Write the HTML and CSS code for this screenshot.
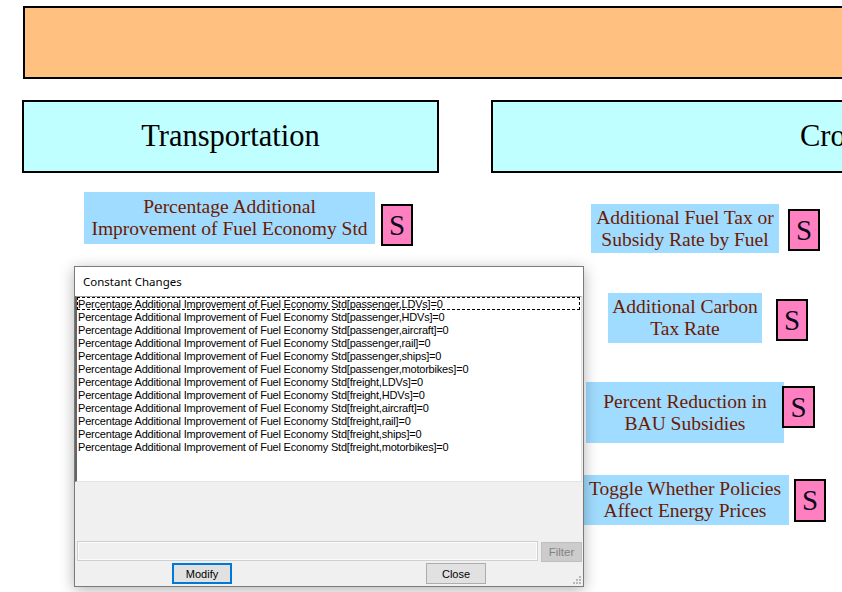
FILE: index.html
```html
<!DOCTYPE html>
<html>
<head>
<meta charset="utf-8">
<title>Constant Changes</title>
<link rel="stylesheet" href="styles.css">
</head>
<body>
<div class="canvas">
  <div class="node header"></div>
  <div class="node sector transport">Transportation</div>
  <div class="node sector cross">Cross-Sector</div>

  <div class="node label l1">Percentage Additional<br>Improvement of Fuel Economy Std</div>
  <div class="node sbox s1">S</div>

  <div class="node label l2">Additional Fuel Tax or<br>Subsidy Rate by Fuel</div>
  <div class="node sbox s2">S</div>

  <div class="node label l3">Additional Carbon<br>Tax Rate</div>
  <div class="node sbox s3">S</div>

  <div class="node label l4">Percent Reduction in<br>BAU Subsidies</div>
  <div class="node sbox s4">S</div>

  <div class="node label l5">Toggle Whether Policies<br>Affect Energy Prices</div>
  <div class="node sbox s5">S</div>

  <div class="node label l6"></div>

  <div class="dialog">
    <div class="titlebar">Constant Changes</div>
    <div class="listbox">
      <div class="item focus">Percentage Additional Improvement of Fuel Economy Std[passenger,LDVs]=0</div>
      <div class="item">Percentage Additional Improvement of Fuel Economy Std[passenger,HDVs]=0</div>
      <div class="item">Percentage Additional Improvement of Fuel Economy Std[passenger,aircraft]=0</div>
      <div class="item">Percentage Additional Improvement of Fuel Economy Std[passenger,rail]=0</div>
      <div class="item">Percentage Additional Improvement of Fuel Economy Std[passenger,ships]=0</div>
      <div class="item">Percentage Additional Improvement of Fuel Economy Std[passenger,motorbikes]=0</div>
      <div class="item">Percentage Additional Improvement of Fuel Economy Std[freight,LDVs]=0</div>
      <div class="item">Percentage Additional Improvement of Fuel Economy Std[freight,HDVs]=0</div>
      <div class="item">Percentage Additional Improvement of Fuel Economy Std[freight,aircraft]=0</div>
      <div class="item">Percentage Additional Improvement of Fuel Economy Std[freight,rail]=0</div>
      <div class="item">Percentage Additional Improvement of Fuel Economy Std[freight,ships]=0</div>
      <div class="item">Percentage Additional Improvement of Fuel Economy Std[freight,motorbikes]=0</div>
    </div>
    <div class="spacer"></div>
    <div class="filter-row">
      <div class="filter-input"></div>
      <div class="btn filter-btn">Filter</div>
    </div>
    <div class="button-row">
      <div class="cell"><div class="btn default">Modify</div></div>
      <div class="cell"><div class="btn">Close</div></div>
    </div>
    <svg class="grip" width="8" height="8" viewBox="0 0 8 8">
      <rect x="6" y="0" width="2" height="2" fill="#b8b8b8"/>
      <rect x="3" y="3" width="2" height="2" fill="#b8b8b8"/>
      <rect x="6" y="3" width="2" height="2" fill="#b8b8b8"/>
      <rect x="0" y="6" width="2" height="2" fill="#b8b8b8"/>
      <rect x="3" y="6" width="2" height="2" fill="#b8b8b8"/>
      <rect x="6" y="6" width="2" height="2" fill="#b8b8b8"/>
    </svg>
  </div>
</div>
</body>
</html>
```
FILE: styles.css
```css
html, body {
  margin: 0;
  padding: 0;
  background: #ffffff;
}

.canvas {
  position: relative;
  width: 842px;
  height: 592px;
  overflow: hidden;
  background: #ffffff;
}

.node {
  position: absolute;
  box-sizing: border-box;
}

.header {
  left: 23px;
  top: 6px;
  width: 900px;
  height: 73px;
  background: #ffc080;
  border: 2px solid #000;
}

.sector {
  top: 100px;
  height: 73px;
  background: #c0ffff;
  border: 2px solid #000;
  font-family: "Liberation Serif", "Times New Roman", serif;
  font-size: 30.5px;
  color: #000;
  display: flex;
  align-items: center;
}

.transport {
  left: 22px;
  width: 417px;
  justify-content: center;
}

.cross {
  left: 491px;
  width: 600px;
  padding-left: 307px;
  white-space: nowrap;
}

.label {
  background: #a0dcff;
  font-family: "Liberation Serif", "Times New Roman", serif;
  font-size: 19.5px;
  line-height: 22px;
  color: #6b1a00;
  display: flex;
  align-items: center;
  justify-content: center;
  text-align: center;
  white-space: nowrap;
}

.sbox {
  background: #ff80c0;
  border: 2px solid #000;
  font-family: "Liberation Serif", "Times New Roman", serif;
  font-size: 29px;
  color: #0a0a20;
  display: flex;
  align-items: center;
  justify-content: center;
}

.l1 { left: 84px;  top: 192px; width: 291px; height: 52px; }
.s1 { left: 381px; top: 204px; width: 32px;  height: 42px; }

.l2 { left: 591px; top: 204px; width: 188px; height: 49px; }
.s2 { left: 788px; top: 209px; width: 32px;  height: 42px; }

.l3 { left: 608px; top: 293px; width: 154px; height: 50px; }
.s3 { left: 776px; top: 299px; width: 32px;  height: 42px; }

.l4 { left: 586px; top: 382px; width: 198px; height: 61px; }
.s4 { left: 782px; top: 386px; width: 33px;  height: 42px; }

.l5 { left: 540px; top: 475px; width: 249px; height: 50px; padding-left: 41px; }
.s5 { left: 794px; top: 479px; width: 32px;  height: 43px; }

.l6 { left: 100px; top: 540px; width: 261px; height: 47px; }

/* Dialog */
.dialog {
  position: absolute;
  left: 74px;
  top: 266px;
  width: 510px;
  height: 321px;
  box-sizing: border-box;
  border: 1px solid #7a7a7a;
  background: #f0f0f0;
  box-shadow: 0 3px 14px rgba(0, 0, 0, 0.3);
  display: flex;
  flex-direction: column;
  font-family: "Liberation Sans", Arial, sans-serif;
}

.titlebar {
  height: 29px;
  flex: none;
  background: #ffffff;
  font-family: "Noto Sans", "Segoe UI", sans-serif;
  font-size: 11.5px;
  color: #000;
  display: flex;
  align-items: center;
  padding-left: 8px;
}

.listbox {
  flex: none;
  height: 186px;
  width: 507px;
  box-sizing: border-box;
  background: #ffffff;
  border-top: 1px solid #a0a0a0;
  border-left: 2px solid #646464;
  border-right: 1px solid #e3e3e3;
  border-bottom: 1px solid #e3e3e3;
}

.item {
  height: 13px;
  line-height: 12px;
  padding-top: 1px;
  font-size: 11px;
  letter-spacing: -0.2px;
  color: #000;
  padding-left: 1px;
  box-sizing: border-box;
  white-space: nowrap;
  margin-right: 1px;
}

.item.focus {
  border: 1px dashed #000;
  line-height: 12px;
  padding-top: 0;
  padding-left: 0;
}

.spacer {
  flex: none;
  height: 59px;
}

.filter-row {
  flex: none;
  height: 21px;
  display: flex;
  gap: 3px;
  padding-left: 2px;
}

.filter-input {
  width: 461px;
  height: 20px;
  box-sizing: border-box;
  border: 1px solid #cfcfcf;
  box-shadow: inset 0 0 0 1px #fbfbfb;
  background: #f0f0f0;
}

.btn {
  box-sizing: border-box;
  width: 60px;
  height: 21px;
  background: #e1e1e1;
  border: 1px solid #adadad;
  font-size: 11px;
  color: #000;
  display: flex;
  align-items: center;
  justify-content: center;
}

.filter-btn {
  width: 41px;
  height: 20px;
  margin-top: 1px;
  background: #cccccc;
  border-color: #bfbfbf;
  color: #838383;
  font-size: 11.5px;
}

.btn.default {
  border: 2px solid #0078d7;
}

.button-row {
  flex: none;
  margin-top: 1px;
  height: 21px;
  display: grid;
  grid-template-columns: 1fr 1fr;
}

.cell {
  display: flex;
  justify-content: center;
}

.grip {
  position: absolute;
  right: 2px;
  bottom: 2px;
}
```
